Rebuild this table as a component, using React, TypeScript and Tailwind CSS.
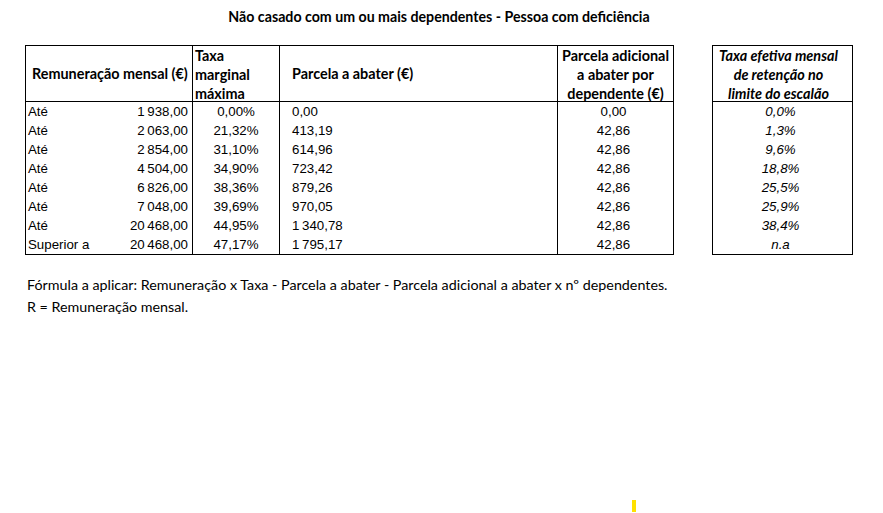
import React from "react";

const t = "\u2009";
const rows = [
  ["Até", `1${t}938,00`, "0,00%", "0,00", "0,00", "0,0%"],
  ["Até", `2${t}063,00`, "21,32%", "413,19", "42,86", "1,3%"],
  ["Até", `2${t}854,00`, "31,10%", "614,96", "42,86", "9,6%"],
  ["Até", `4${t}504,00`, "34,90%", "723,42", "42,86", "18,8%"],
  ["Até", `6${t}826,00`, "38,36%", "879,26", "42,86", "25,5%"],
  ["Até", `7${t}048,00`, "39,69%", "970,05", "42,86", "25,9%"],
  ["Até", `20${t}468,00`, "44,95%", `1${t}340,78`, "42,86", "38,4%"],
  ["Superior a", `20${t}468,00`, "47,17%", `1${t}795,17`, "42,86", "n.a"],
];

const head = "font-['Lato',sans-serif] font-bold text-[14.4px] leading-[19px] text-black whitespace-nowrap";
const body = "font-['Liberation_Sans',Arial,sans-serif] text-[13.3px] leading-[19px] text-black h-[19px] whitespace-nowrap";

export default function App() {
  return (
    <div className="relative w-[883px] h-[513px] bg-white overflow-hidden">
      <div className="pl-[25px]">
        <div className="w-[828px] text-center pt-[8px] h-[45px] font-['Lato',sans-serif] font-bold text-[14.2px] leading-[18px] text-black">
          Não casado com um ou mais dependentes - Pessoa com deficiência
        </div>
        <div className="flex gap-[38px]">
          <div className="flex border border-black w-[649px]">
            {/* col 1 */}
            <div className="w-[167px] border-r border-black">
              <div className={`h-[56px] border-b border-black flex items-center pl-[6px] ${head}`}>
                Remuneração mensal (€)
              </div>
              {rows.map((r, i) => (
                <div key={i} className={`flex justify-between pl-[2px] pr-[4px] ${body}`}>
                  <span>{r[0]}</span>
                  <span>{r[1]}</span>
                </div>
              ))}
            </div>
            {/* col 2 */}
            <div className="w-[87px] border-r border-black">
              <div className={`h-[56px] border-b border-black pl-[2px] ${head}`}>
                Taxa
                <br />
                marginal
                <br />
                máxima
              </div>
              {rows.map((r, i) => (
                <div key={i} className={`text-center ${body}`}>
                  {r[2]}
                </div>
              ))}
            </div>
            {/* col 3 */}
            <div className="w-[278px] border-r border-black">
              <div className={`h-[56px] border-b border-black flex items-center pl-[12px] ${head}`}>
                Parcela a abater (€)
              </div>
              {rows.map((r, i) => (
                <div key={i} className={`pl-[12px] ${body}`}>
                  {r[3]}
                </div>
              ))}
            </div>
            {/* col 4 */}
            <div className="flex-1">
              <div className={`h-[56px] border-b border-black text-center ${head}`}>
                Parcela adicional
                <br />
                a abater por
                <br />
                dependente (€)
              </div>
              {rows.map((r, i) => (
                <div key={i} className={`text-center pr-[4px] ${body}`}>
                  {r[4]}
                </div>
              ))}
            </div>
          </div>
          <div className="border border-black w-[141px]">
            <div className={`h-[56px] border-b border-black text-center italic pr-[8px] ${head}`}>
              Taxa efetiva mensal
              <br />
              de retenção no
              <br />
              limite do escalão
            </div>
            {rows.map((r, i) => (
              <div key={i} className={`text-center italic pr-[4px] ${body}`}>
                {r[5]}
              </div>
            ))}
          </div>
        </div>
        <div className="pt-[19px] pl-[2px] font-['Lato',sans-serif] text-[14.3px] leading-[22px] text-black">
          <div>Fórmula a aplicar: Remuneração x Taxa - Parcela a abater - Parcela adicional a abater x nº dependentes.</div>
          <div>R = Remuneração mensal.</div>
        </div>
      </div>
      <div className="absolute left-[632px] top-[500px] w-[4px] h-[12px] bg-[#ffe100]" />
    </div>
  );
}
